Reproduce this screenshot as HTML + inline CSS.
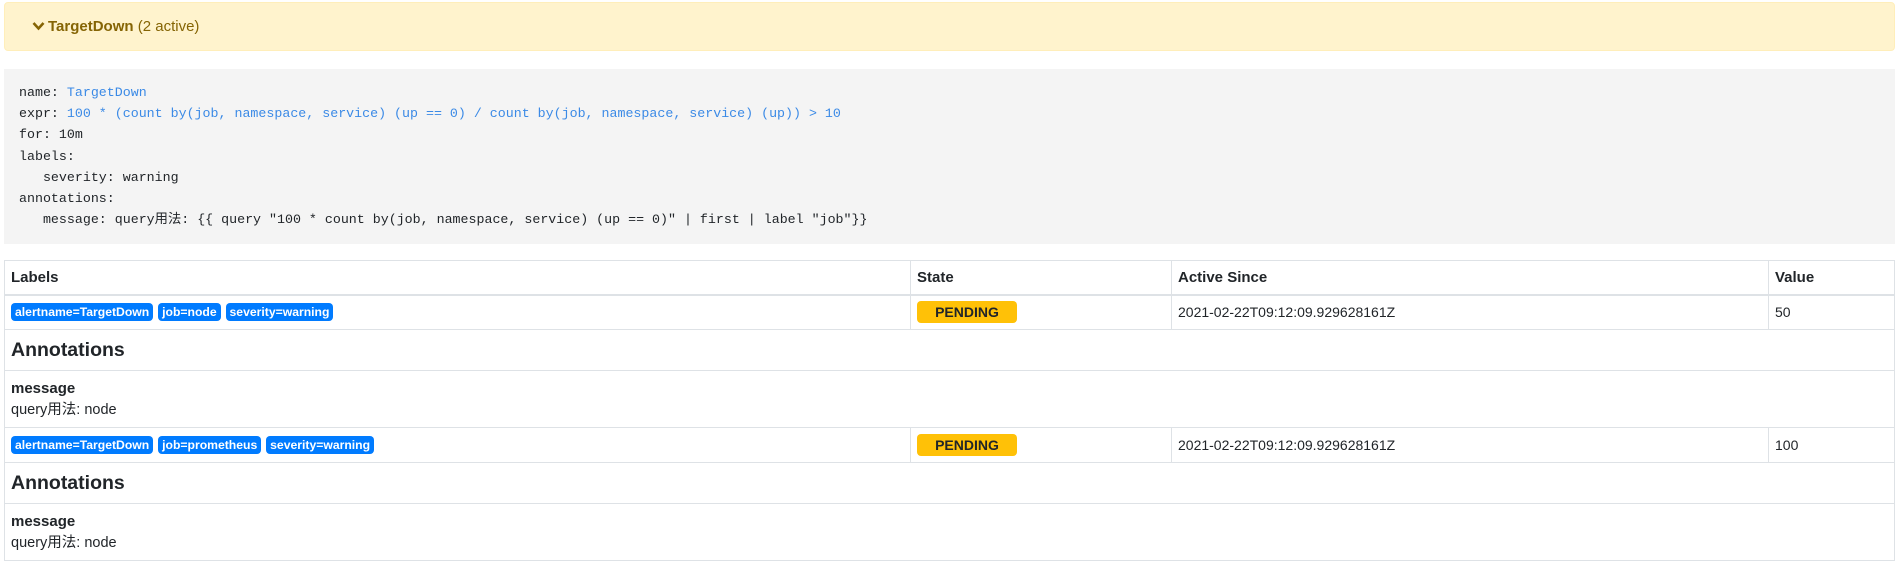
<!DOCTYPE html>
<html><head><meta charset="utf-8"><style>
*{box-sizing:border-box;margin:0;padding:0}
body{width:1897px;height:568px;background:#fff;font-family:"Liberation Sans","Noto Sans CJK SC",sans-serif;color:#212529;font-size:14px;overflow:hidden;position:relative}
.alert{position:absolute;left:4px;top:2px;width:1891px;height:49px;background:#fff3cd;border:1px solid #ffeeba;border-radius:4px;color:#856404;font-size:15px;line-height:47px;padding-left:27px}
.alert b{font-weight:bold}
.alert svg{vertical-align:middle;margin-right:3px;margin-top:-3px}
pre{position:absolute;left:4px;top:69px;width:1891px;height:175px;background:#f4f4f4;font-family:"Liberation Mono","Noto Sans CJK SC",monospace;font-size:13.3px;line-height:21.2px;padding:13px 15px;color:#212529}
.s{color:#3b8ae6}
table{position:absolute;left:4px;top:260px;width:1891px;border-collapse:collapse}
td,th{border:1px solid #dee2e6;padding:0 6px;text-align:left;vertical-align:middle}
th{height:34px;border-bottom:2px solid #dee2e6;font-size:15px}
tr.r td{height:35px}
tr.a td{height:41px;font-size:19.5px;font-weight:bold;border-left:1px solid #dee2e6}
tr.m td{height:57px;font-size:14.5px;line-height:21px}
.b{display:inline-block;background:#007bff;color:#fff;font-weight:bold;font-size:12.2px;height:18px;line-height:18px;padding:0 4px;border-radius:4px;margin-right:1px}
.p{display:inline-block;background:#ffc107;color:#212529;font-weight:bold;font-size:14px;height:22px;line-height:22px;width:100px;text-align:center;border-radius:4px}
</style></head><body>
<div class="alert"><svg width="13" height="10" viewBox="0 0 13 10"><path d="M1.5 2 L6.5 7.5 L11.5 2" stroke="#856404" stroke-width="2.6" fill="none"/></svg><b>TargetDown</b> (2 active)</div>
<pre>name: <span class="s">TargetDown</span>
expr: <span class="s">100 * (count by(job, namespace, service) (up == 0) / count by(job, namespace, service) (up)) &gt; 10</span>
for: 10m
labels:
   severity: warning
annotations:
   message: query用法: {{ query "100 * count by(job, namespace, service) (up == 0)" | first | label "job"}}</pre>
<table>
<tr><th style="width:906px">Labels</th><th style="width:261px">State</th><th style="width:597px">Active Since</th><th>Value</th></tr>
<tr class="r"><td><span class="b">alertname=TargetDown</span> <span class="b">job=node</span> <span class="b">severity=warning</span></td><td><span class="p">PENDING</span></td><td>2021-02-22T09:12:09.929628161Z</td><td>50</td></tr>
<tr class="a"><td colspan="4">Annotations</td></tr>
<tr class="m"><td colspan="4"><b style="font-size:15px">message</b><br>query用法: node</td></tr>
<tr class="r"><td><span class="b">alertname=TargetDown</span> <span class="b">job=prometheus</span> <span class="b">severity=warning</span></td><td><span class="p">PENDING</span></td><td>2021-02-22T09:12:09.929628161Z</td><td>100</td></tr>
<tr class="a"><td colspan="4">Annotations</td></tr>
<tr class="m"><td colspan="4"><b style="font-size:15px">message</b><br>query用法: node</td></tr>
</table>
</body></html>
